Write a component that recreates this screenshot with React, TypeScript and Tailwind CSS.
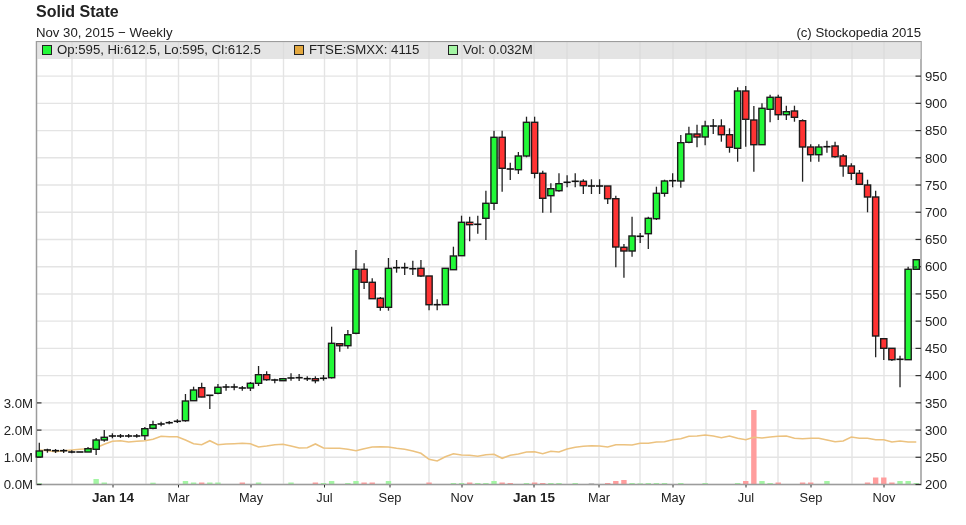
import React from "react";

// candle x position from week index
const cx = (i: number) => 39.3 + i * 8.12;

// [kind, bodyTop, bodyBottom, wickHigh, wickLow] in page pixels, one per week
type Candle = ["g" | "r" | "d", number, number, number, number];
const candles: Candle[] = [
  ["g", 451, 457, 442.7, 457], ["d", 450, 450, 448.7, 452.7], ["d", 450.7, 450.7, 449, 453], ["d", 450.7, 450.7, 449, 453],
  ["d", 452, 452, 450.3, 453.3], ["d", 452, 452, 452, 452], ["g", 448.7, 452, 447, 452], ["g", 440, 449.3, 438, 455],
  ["g", 437.3, 440, 430, 441.7], ["d", 436, 436, 433.3, 438.3], ["d", 436, 436, 434, 438], ["d", 436, 436, 434, 437.7],
  ["d", 436, 436, 434, 437.7], ["g", 428.7, 435.7, 427, 440], ["g", 424.7, 428.3, 420.7, 429.3], ["d", 424, 424, 421.7, 426.3],
  ["d", 422.7, 422.7, 421, 424.3], ["d", 421.3, 421.3, 419.3, 423], ["g", 401, 420.7, 394, 421.7], ["g", 390, 400.7, 386.7, 401],
  ["r", 387.7, 397, 382.7, 397.3], ["d", 395.3, 395.3, 395, 409], ["g", 387.3, 393.3, 384, 394.3], ["d", 387, 387, 384, 390.7],
  ["d", 387, 387, 383.7, 390.3], ["d", 388, 388, 386, 390.7], ["g", 383.3, 388, 382, 391], ["g", 374.7, 383.3, 366, 386],
  ["r", 374.7, 379.7, 371.3, 380.7], ["d", 380, 380, 378.7, 383.3], ["g", 378.7, 380.7, 378.7, 380.7], ["d", 378, 378, 373.3, 380.7],
  ["d", 377.7, 377.7, 374, 381], ["d", 378.7, 378.7, 376.3, 381], ["r", 378.7, 380.7, 376.3, 383.3], ["d", 378.3, 378.3, 375, 380.7],
  ["g", 343.3, 377.7, 326.7, 378.5], ["r", 343.7, 345.7, 343.7, 351.7], ["g", 334.7, 345.7, 330, 348.7], ["g", 269.3, 333.3, 250, 334.3],
  ["r", 269.3, 282.3, 263.3, 289], ["r", 282.3, 298.7, 278.3, 298.7], ["r", 298.3, 307.3, 297, 310.7], ["g", 268.3, 307.3, 258, 310.7],
  ["d", 267.7, 267.7, 260, 272.7], ["d", 267.7, 267.7, 262.7, 275], ["d", 268.7, 268.7, 260.7, 275], ["r", 268.3, 276, 260, 277],
  ["r", 276, 304.7, 276, 310.3], ["d", 304.7, 304.7, 299.3, 310.3], ["g", 268.3, 304.7, 268.3, 304.7], ["g", 256, 269.7, 246.7, 269.7],
  ["g", 222.3, 255.7, 215.7, 255.7], ["r", 222.3, 224.7, 216.7, 241.3], ["d", 224.3, 224.3, 215.7, 233.7], ["g", 203.3, 218.3, 190.7, 240],
  ["g", 137.3, 203.3, 130.7, 210], ["r", 137.3, 168.3, 130.7, 191.7], ["d", 169, 169, 162.7, 180], ["g", 156, 169.7, 152, 174],
  ["g", 122.3, 156, 116.7, 157.3], ["r", 122.3, 173.3, 116.7, 178.3], ["r", 173.3, 198.3, 170.7, 212.7], ["g", 188.7, 195.7, 183.3, 212.7],
  ["g", 183.7, 190.7, 173.3, 191.7], ["d", 182.3, 182.3, 175.3, 187.3], ["d", 181.3, 181.3, 173.3, 187.3], ["r", 181.3, 185.7, 179.3, 194],
  ["d", 186, 186, 179.3, 194], ["d", 186, 186, 179.3, 194], ["r", 186, 198.7, 186, 204], ["r", 198.7, 247, 195.7, 267.3],
  ["r", 247.3, 251, 244, 277.7], ["g", 236, 251, 216.7, 256.7], ["d", 236.3, 236.3, 233, 243], ["g", 218.3, 233.7, 216.7, 249],
  ["g", 193.3, 218.7, 186.7, 220], ["g", 181, 193.3, 179.7, 196.7], ["d", 180.7, 180.7, 173.3, 187.3], ["g", 142.7, 181, 135, 187.7],
  ["g", 134, 142.3, 126.7, 143.3], ["r", 134, 137, 124.7, 147.3], ["g", 126, 137, 120.7, 145.3], ["d", 126, 126, 119, 134],
  ["r", 126, 134.7, 119.3, 141.7], ["r", 134.7, 147.3, 128.3, 152.7], ["g", 91, 148.3, 87.3, 161.7], ["r", 91, 119.3, 86, 146.7],
  ["r", 120, 144.7, 106, 171.7], ["g", 108.3, 144.7, 103.3, 144.7], ["g", 97.3, 109.3, 94.7, 122.3], ["r", 97.3, 114.7, 94.7, 120],
  ["g", 111.7, 114.7, 105.7, 120], ["r", 111, 117.3, 105.7, 121.7], ["r", 120.7, 147, 119.3, 181.7], ["r", 147, 154.7, 144.3, 161.7],
  ["g", 147, 154.7, 144.3, 161.7], ["d", 146.7, 146.7, 140.7, 152.7], ["r", 146, 156.7, 141.7, 157.7], ["r", 156, 166, 154, 176.7],
  ["r", 166, 173.3, 163.3, 180], ["r", 173.3, 184.3, 170, 184.3], ["r", 185, 197, 179.7, 212.3], ["r", 197, 336, 190.7, 357.3],
  ["r", 338.7, 348.3, 338.7, 360], ["r", 348.3, 359.7, 348.3, 361], ["d", 359.3, 359.3, 355.7, 387.3], ["g", 269.3, 359.7, 266.7, 360],
  ["g", 259.7, 269.3, 259.7, 269.3],
];

// FTSE:SMXX line, one y per week
const ftse = [
  450, 450.7, 451.7, 450.7, 450, 449.3, 448.7, 447.7, 444.3, 441.3, 440.7, 442, 441.3, 440.7, 439.3, 436.3, 436.7, 436.7, 440,
  443.7, 444.7, 440.7, 444.7, 444, 443.7, 443.3, 443.7, 447, 446, 444.7, 444.3, 446, 448, 447.7, 444, 448, 448.3, 448.3, 449.3,
  450.7, 448.7, 447, 446.7, 447, 448.3, 449.3, 451, 453.3, 459.3, 461, 456.7, 453.7, 455, 455.3, 456.3, 454.7, 454.3, 458.3, 455.3,
  454, 452, 451.7, 453.7, 451.3, 452, 449, 447.3, 446.3, 445.7, 446, 447, 444.7, 444.7, 445, 443.3, 443.3, 442, 441.7, 439.7,
  438.7, 436.3, 436, 435, 436, 437.7, 436, 438.3, 439.7, 437.3, 438, 437, 436.3, 436, 438.3, 438.7, 438.3, 438.3, 440, 441.7,
  441, 437, 438.3, 438.3, 439.7, 439.7, 442, 441, 442, 442,
];

// [week, height, kind] volume bars
const volume: [number, number, "g" | "r" | "n"][] = [
  [0, 0.8, "g"], [7, 5, "g"], [8, 1.5, "g"], [14, 1.3, "g"], [18, 3, "g"], [19, 1.5, "g"], [20, 1.5, "r"], [21, 1.5, "g"], [22, 1.5, "g"],
  [25, 1.5, "r"], [27, 1.5, "g"], [31, 1.5, "g"], [34, 1.5, "r"], [35, 1, "g"], [36, 3, "g"], [38, 1, "g"], [39, 3, "g"], [40, 1.5, "r"],
  [41, 1.5, "r"], [43, 3, "g"], [48, 1.5, "r"], [51, 1, "g"], [52, 1, "g"], [53, 1.5, "r"], [54, 1, "g"], [55, 1, "g"], [56, 3, "g"],
  [57, 1.5, "r"], [58, 1, "r"], [60, 1, "g"], [61, 1.5, "r"], [62, 1, "r"], [63, 1, "g"], [64, 1, "g"], [66, 1, "g"], [68, 1, "n"],
  [70, 1, "r"], [71, 3, "r"], [72, 4, "r"], [73, 1, "g"], [74, 0.7, "g"], [75, 1, "g"], [76, 1, "g"], [77, 1, "g"], [79, 1, "g"], [82, 1, "g"],
  [86, 1, "g"], [87, 3, "r"], [88, 74, "r"], [89, 3, "g"], [90, 1, "g"], [91, 1.5, "r"], [94, 1.5, "r"], [95, 1.5, "r"], [97, 3, "g"],
  [102, 1.5, "r"], [103, 6.5, "r"], [104, 6.5, "r"], [105, 1.5, "r"], [106, 3, "g"], [107, 3, "g"], [108, 1, "g"],
];

const prices = [950, 900, 850, 800, 750, 700, 650, 600, 550, 500, 450, 400, 350, 300, 250, 200];
const priceY = (p: number) => 484.5 - (p - 200) * 0.5445;
const vols = ["0.0M", "1.0M", "2.0M", "3.0M"];
const gridX = [72, 113, 146, 178.5, 218.5, 251, 283.5, 324.5, 357, 390, 429, 462, 494, 534, 567, 599, 640, 673, 706, 746, 778, 811, 852, 884];
const months: [number, string, boolean][] = [
  [113, "Jan 14", true], [178.5, "Mar", false], [251, "May", false], [324.5, "Jul", false], [390, "Sep", false], [462, "Nov", false],
  [534, "Jan 15", true], [599, "Mar", false], [673, "May", false], [746, "Jul", false], [811, "Sep", false], [884, "Nov", false],
];

const fills = { g: "#22f838", r: "#ff3333" };

function Chart() {
  return (
    <svg width={966} height={484} viewBox="0 41 966 484" className="block">
      {prices.map((p) => (
        <line key={p} x1={37} x2={921} y1={priceY(p)} y2={priceY(p)} stroke="#e4e4e4" strokeWidth={1.4} />
      ))}
      {gridX.map((x) => (
        <line key={x} x1={x} x2={x} y1={41} y2={484} stroke="#e4e4e4" strokeWidth={1.4} />
      ))}

      {/* volume bars */}
      {volume.map(([i, h, k]) => (
        <rect
          key={i}
          x={cx(i) - 2.7}
          y={484 - h}
          width={5.4}
          height={h}
          fill={k === "g" ? "#a4f5a4" : k === "r" ? "#ff9d9d" : "#c8c8c8"}
        />
      ))}

      <polyline
        points={ftse.map((y, i) => `${cx(i)},${y}`).join(" ")}
        fill="none"
        stroke="#ecc27f"
        strokeWidth={1.6}
      />

      {/* plot frame */}
      <path d="M36.5 41.5H921V484.5H36.5Z" fill="none" stroke="#9c9c9c" strokeWidth={1.5} />

      {/* ticks */}
      {prices.map((p) => (
        <line key={p} x1={915.5} x2={921} y1={priceY(p)} y2={priceY(p)} stroke="#333" strokeWidth={1.2} />
      ))}
      {vols.map((v, i) => (
        <line key={v} x1={37} x2={41.5} y1={484.5 - i * 27.2} y2={484.5 - i * 27.2} stroke="#333" strokeWidth={1.2} />
      ))}
      {months.map(([x, label]) => (
        <line key={x + label} x1={x} x2={x} y1={485} y2={487.5} stroke="#333" />
      ))}

      {/* candles */}
      {candles.map(([k, top, bottom, high, low], i) => {
        const x = cx(i);
        return (
          <g key={i}>
            <line x1={x} x2={x} y1={high} y2={low} stroke="#222" strokeWidth={1.3} />
            {k === "d" ? (
              <line x1={x - 3.6} x2={x + 3.6} y1={top} y2={top} stroke="#111" strokeWidth={1.6} />
            ) : (
              <rect x={x - 3.1} y={top} width={6.2} height={bottom - top} fill={fills[k]} stroke="#1c1c1c" strokeWidth={1.4} />
            )}
          </g>
        );
      })}
      <line x1={914} x2={917} y1={267} y2={267} stroke="#222" />

      {/* axis labels */}
      {prices.map((p) => (
        <text key={p} x={925} y={priceY(p) + 4.7} fontSize={13.2} fill="#222">
          {p}
        </text>
      ))}
      {vols.map((v, i) => (
        <text key={v} x={33} y={484.5 - i * 27.2 + 4.7} fontSize={13.2} fill="#222" textAnchor="end">
          {v}
        </text>
      ))}
      {months.map(([x, label, bold]) => (
        <text
          key={x + label}
          x={x}
          y={501.5}
          fontSize={bold ? 13.5 : 12.8}
          fontWeight={bold ? 700 : 400}
          fill="#222"
          textAnchor="middle"
        >
          {label}
        </text>
      ))}
    </svg>
  );
}

function LegendItem({ color, label, width }: { color: string; label: string; width: string }) {
  return (
    <div className={`flex items-center gap-[5px] ${width}`}>
      <span className="h-[10px] w-[10px] border border-[#222]" style={{ backgroundColor: color }} />
      <span>{label}</span>
    </div>
  );
}

export default function App() {
  return (
    <div className="relative h-[525px] w-[966px] overflow-hidden bg-white font-['Liberation_Sans',sans-serif] text-[#222] blur-[0.35px]">
      <div className="h-[41px] pl-9 pr-[45px]">
        <div className="pt-[3px] text-[16px] font-bold leading-[18px]">Solid State</div>
        <div className="mt-[4px] flex justify-between text-[13.2px] leading-[16px]">
          <span>Nov 30, 2015 − Weekly</span>
          <span>(c) Stockopedia 2015</span>
        </div>
      </div>
      <div className="relative">
        <Chart />
        {/* legend band sits over the grid */}
        <div className="absolute left-[37px] top-[1px] flex h-[16.5px] w-[884px] items-center bg-[#d8d8d8]/70 pl-[5px] text-[13.2px]">
          <LegendItem color="#22f838" label="Op:595, Hi:612.5, Lo:595, Cl:612.5" width="w-[252px]" />
          <LegendItem color="#e3a83f" label="FTSE:SMXX: 4115" width="w-[154px]" />
          <LegendItem color="#a4f5a4" label="Vol: 0.032M" width="w-[100px]" />
        </div>
      </div>
    </div>
  );
}
